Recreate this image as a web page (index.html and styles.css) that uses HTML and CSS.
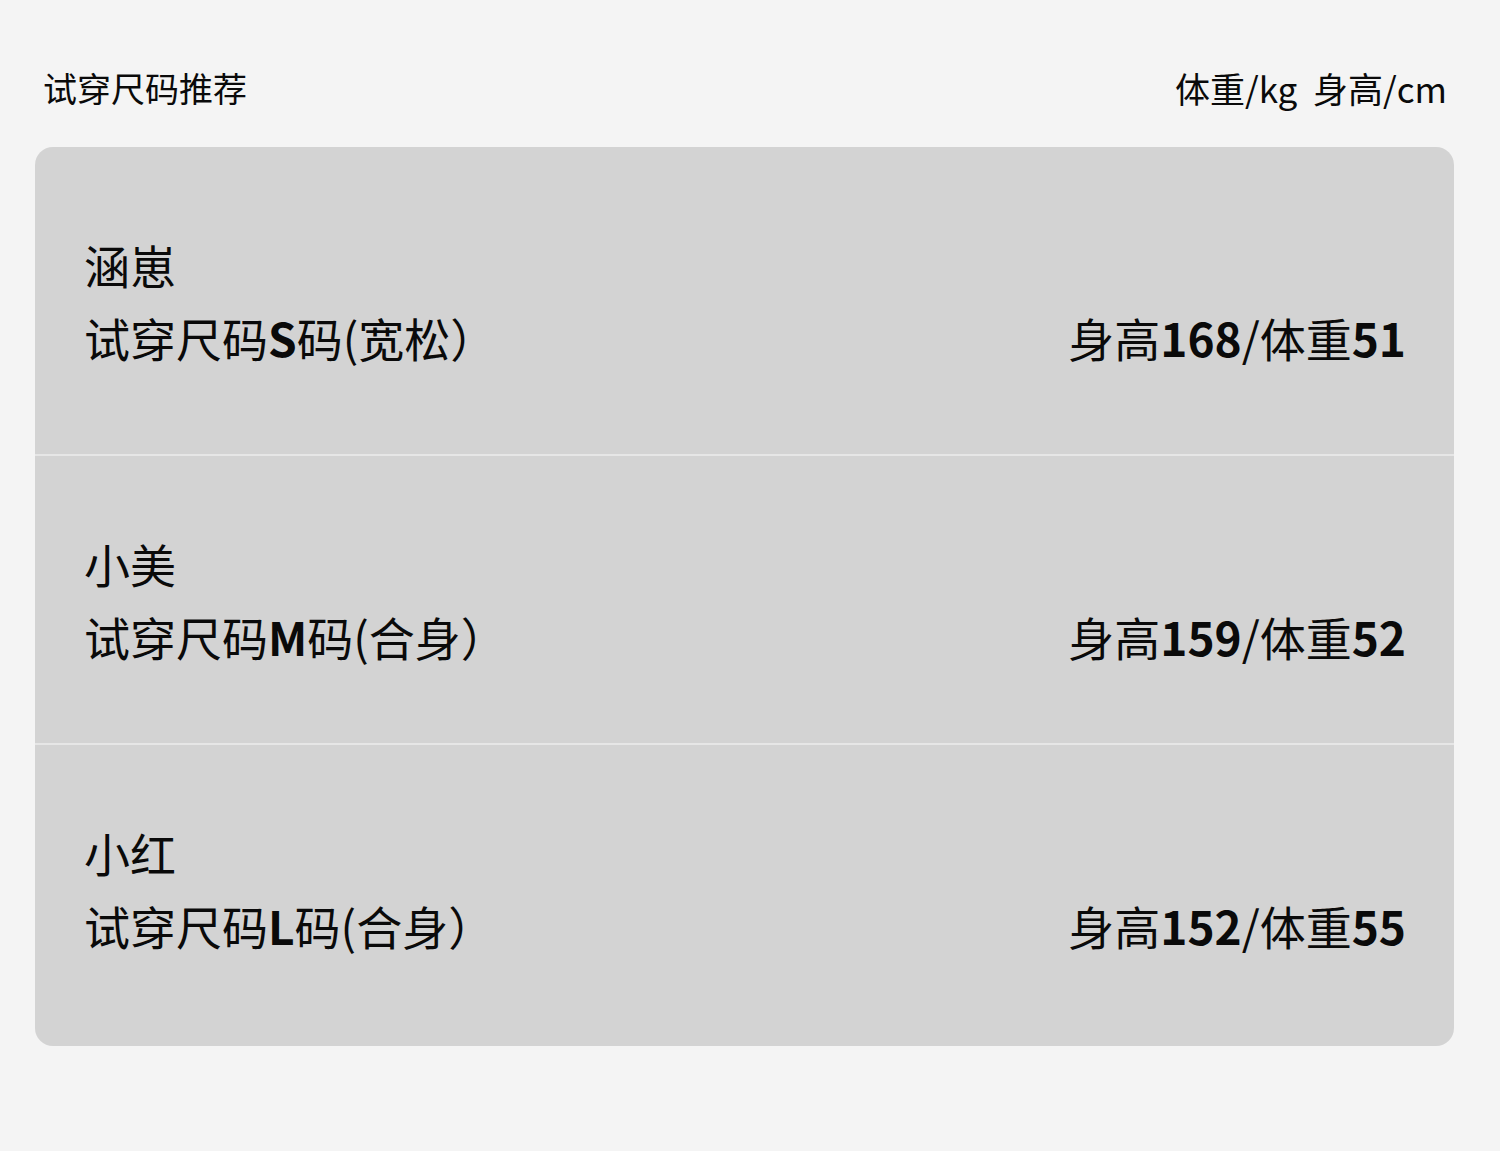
FILE: index.html
```html
<!DOCTYPE html>
<html lang="zh-CN">
<head>
<meta charset="utf-8">
<link rel="stylesheet" href="styles.css">
</head>
<body>
<div class="page">
  <header class="top">
    <span class="title">试穿尺码推荐</span>
    <span class="units">体重/kg&nbsp; 身高/cm</span>
  </header>
  <div class="card">
    <div class="row row-1">
      <div class="left">
        <div class="line">涵崽</div>
        <div class="line">试穿尺码<b>S</b>码(宽松）</div>
      </div>
      <div class="right">身高<b>168</b>/体重<b>51</b></div>
    </div>
    <div class="row row-2">
      <div class="left">
        <div class="line">小美</div>
        <div class="line">试穿尺码<b>M</b>码(合身）</div>
      </div>
      <div class="right">身高<b>159</b>/体重<b>52</b></div>
    </div>
    <div class="row row-3">
      <div class="left">
        <div class="line">小红</div>
        <div class="line">试穿尺码<b>L</b>码(合身）</div>
      </div>
      <div class="right">身高<b>152</b>/体重<b>55</b></div>
    </div>
  </div>
</div>
</body>
</html>
```
FILE: styles.css
```css
html, body {
  margin: 0;
  padding: 0;
  background: #f4f4f4;
}
body {
  font-family: "Noto Sans CJK SC", "Noto Sans", sans-serif;
  color: #0a0a0a;
}
.page {
  padding: 0 46px 0 35px;
}
.top {
  display: flex;
  justify-content: space-between;
  align-items: flex-start;
  height: 147px;
  padding: 63px 7px 0 8px;
  box-sizing: border-box;
  line-height: 50px;
}
.title {
  font-size: 34px;
}
.units {
  font-size: 35px;
}
.card {
  background: #d3d3d3;
  border-radius: 18px;
  width: 1419px;
  overflow: hidden;
}
.row {
  display: flex;
  justify-content: space-between;
  align-items: flex-end;
  padding: 0 48px 0 49px;
  font-size: 46px;
  line-height: 73px;
}
.row + .row {
  border-top: 2px solid #e6e6e6;
}
.row-1 { padding-top: 81px; padding-bottom: 80px; }
.row-2 { padding-top: 71px; padding-bottom: 70px; }
.row-3 { padding-top: 71px; padding-bottom: 84px; }
.line { white-space: nowrap; }
.right { white-space: nowrap; }
b { font-weight: 700; }
```
